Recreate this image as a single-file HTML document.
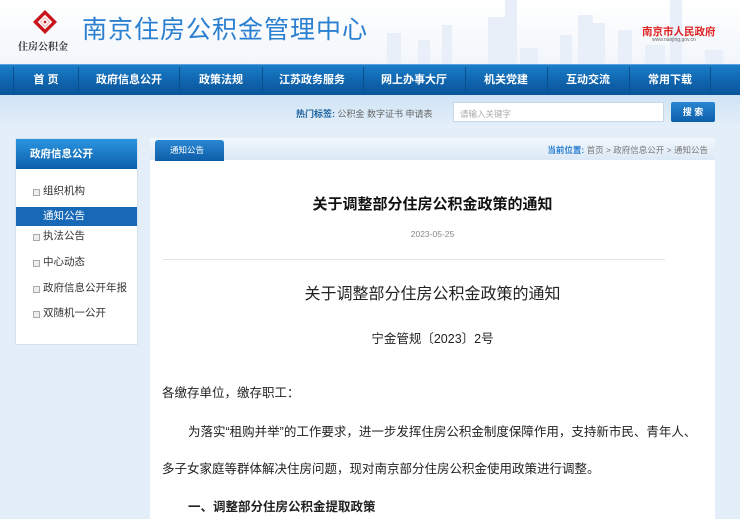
<!DOCTYPE html>
<html><head><meta charset="utf-8"><style>
*{margin:0;padding:0;box-sizing:border-box}
body{width:740px;height:519px;overflow:hidden;background:#e4eef8;font-family:"Liberation Sans","Noto Sans CJK SC",sans-serif;position:relative}
.hdr{position:absolute;left:0;top:0;width:740px;height:64px;background:linear-gradient(#fff,#f2f6fb)}
.sky{position:absolute;top:0;left:370px}
.title{position:absolute;left:82px;top:10px;font-size:25px;color:#2a7fd0;letter-spacing:1px}
.logotxt{position:absolute;left:18px;top:38px;font-size:10px;font-weight:bold;color:#333;font-family:"Noto Serif CJK SC",serif}
.gov{position:absolute;left:642px;top:24px;font-size:10.5px;font-weight:bold;color:#d22}
.govu{position:absolute;left:652px;top:37px;font-size:5px;color:#666}
.nav{position:absolute;top:64px;left:0;width:740px;height:31px;background:linear-gradient(#1a7dc8,#0f62ab 60%,#0a559a);border-top:1px solid #5aa2e0}
.nav span{position:absolute;top:0;height:31px;line-height:31px;color:#fff;font-size:11px;font-weight:bold;text-align:center;transform:translateX(-50%)}
.nav i{position:absolute;top:2px;width:1px;height:27px;background:#3a8ad0;border-right:1px solid #0b4f8e}
.sub{position:absolute;top:95px;left:0;width:740px;height:33px;background:linear-gradient(#cfe3f5,#e4eff9)}
.hot{position:absolute;left:296px;top:107px;font-size:9px;color:#666}
.hot b{color:#1a5f9e}
.inp{position:absolute;left:453px;top:102px;width:211px;height:20px;background:#fff;border:1px solid #c8d8e8;font-size:8.5px;color:#aaa;padding:5px 6px}
.btn{position:absolute;left:671px;top:102px;width:44px;height:20px;background:linear-gradient(#2a86d2,#0d5ea8);color:#fff;font-size:9px;font-weight:bold;text-align:center;line-height:20px;border-radius:2px}
.side{position:absolute;left:15px;top:138px;width:123px;height:207px;background:#fff;border:1px solid #d4e2ef}
.sh{height:30px;background:linear-gradient(#2b95e0,#0c5ea9);color:#fff;font-size:10.5px;font-weight:bold;line-height:30px;padding-left:14px}
.si{position:absolute;left:0;width:121px;font-size:10.5px;color:#333;padding-left:27px;height:19px;line-height:19px}
.si:before{content:"";position:absolute;left:17px;top:7px;width:5px;height:5px;border:1px solid #aaa;background:#eee}
.si.on{background:#1769b7;color:#fff}
.si.on:before{display:none}
.main{position:absolute;left:150px;top:138px;width:565px;height:381px;background:#fff}
.tabbar{height:22px;background:linear-gradient(#f2f7fc,#dbe9f6)}
.tab{position:absolute;left:5px;top:2px;width:69px;height:21px;background:linear-gradient(#2a86d2,#0d5ea8);border-radius:3px 3px 0 0;color:#fff;font-size:8.5px;line-height:21px;padding-left:15px}
.bc{position:absolute;right:7px;top:6px;font-size:8.5px;color:#777}
.bc b{color:#2a7fd0}
.t1{position:absolute;left:0;width:565px;text-align:center;top:55px;font-size:15px;font-weight:bold;color:#111}
.date{position:absolute;left:0;width:565px;text-align:center;top:91px;font-size:8.5px;color:#888}
.hr{position:absolute;left:13px;top:121px;width:502px;height:1px;background:#e2e2e2}
.t2{position:absolute;left:0;width:565px;text-align:center;top:142px;font-size:16px;color:#222}
.no{position:absolute;left:0;width:565px;text-align:center;top:190px;font-size:12.5px;color:#222}
.p{position:absolute;left:12px;font-size:12.5px;color:#222;white-space:nowrap}
</style></head><body>
<div class="hdr">
<svg class="sky" width="370" height="64" viewBox="0 0 370 64"><g fill="#e8eff8"><rect x="17" y="33" width="14" height="31"/><rect x="48" y="40" width="12" height="24"/><rect x="72" y="25" width="10" height="39"/><rect x="118" y="17" width="17" height="47"/><rect x="135" y="0" width="12" height="64"/><rect x="150" y="48" width="18" height="16"/><rect x="190" y="35" width="12" height="29"/><rect x="208" y="15" width="15" height="49"/><rect x="223" y="23" width="12" height="41"/><rect x="248" y="30" width="14" height="34"/><rect x="275" y="45" width="20" height="19"/><rect x="300" y="0" width="12" height="64"/><rect x="335" y="50" width="18" height="14"/></g></svg>
<svg style="position:absolute;left:31px;top:9px" width="28" height="26" viewBox="0 0 28 26"><path d="M14 1 L26 13 L14 25 L2 13Z" fill="#c8151b"/><path d="M14 7 L20 13 L14 19 L8 13 Z M11 13 L14 10 L17 13 L14 16 Z" fill="none" stroke="#fff" stroke-width="1.8"/></svg>
<div class="logotxt">住房公积金</div>
<div class="title">南京住房公积金管理中心</div>
<div class="gov">南京市人民政府</div><div class="govu">www.nanjing.gov.cn</div>
</div>
<div class="nav">
<i style="left:13px"></i><i style="left:78px"></i><i style="left:179px"></i><i style="left:262px"></i><i style="left:363px"></i><i style="left:465px"></i><i style="left:547px"></i><i style="left:629px"></i><i style="left:710px"></i>
<span style="left:46px">首 页</span><span style="left:129px">政府信息公开</span><span style="left:221px">政策法规</span><span style="left:312px">江苏政务服务</span><span style="left:414px">网上办事大厅</span><span style="left:506px">机关党建</span><span style="left:588px">互动交流</span><span style="left:670px">常用下载</span>
</div>
<div class="sub"></div>
<div class="hot"><b>热门标签:</b> 公积金 数字证书 申请表</div>
<div class="inp">请输入关键字</div>
<div class="btn">搜 索</div>
<div class="side"><div class="sh">政府信息公开</div>
<div class="si" style="top:43px">组织机构</div>
<div class="si on" style="top:68px">通知公告</div>
<div class="si" style="top:88px">执法公告</div>
<div class="si" style="top:114px">中心动态</div>
<div class="si" style="top:140px">政府信息公开年报</div>
<div class="si" style="top:165px">双随机一公开</div>
</div>
<div class="main">
<div class="tabbar"></div><div class="tab">通知公告</div>
<div class="bc"><b>当前位置:</b> 首页 &gt; 政府信息公开 &gt; 通知公告</div>
<div class="t1">关于调整部分住房公积金政策的通知</div>
<div class="date">2023-05-25</div>
<div class="hr"></div>
<div class="t2">关于调整部分住房公积金政策的通知</div>
<div class="no">宁金管规〔2023〕2号</div>
<div class="p" style="top:244px">各缴存单位，缴存职工：</div>
<div class="p" style="top:283px;left:38px">为落实“租购并举”的工作要求，进一步发挥住房公积金制度保障作用，支持新市民、青年人、</div>
<div class="p" style="top:320px">多子女家庭等群体解决住房问题，现对南京部分住房公积金使用政策进行调整。</div>
<div class="p" style="top:358px;left:38px;font-weight:bold">一、调整部分住房公积金提取政策</div>
</div>
</body></html>
